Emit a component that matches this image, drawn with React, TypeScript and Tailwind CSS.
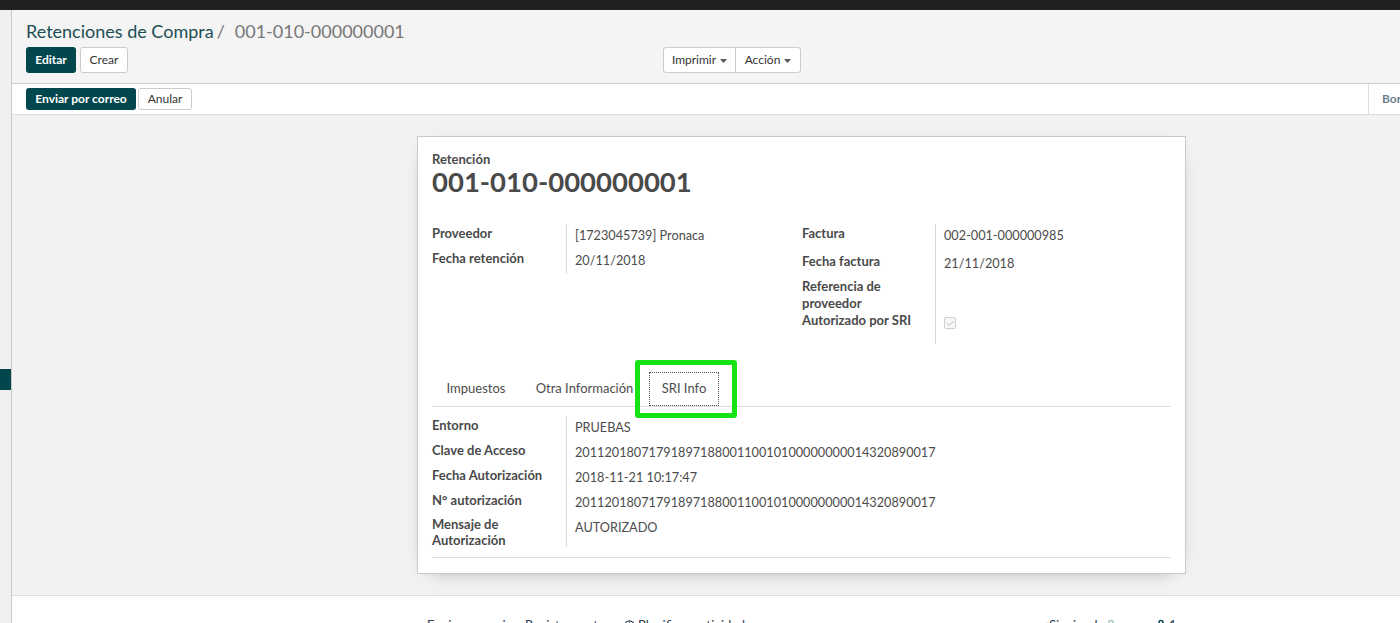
import { Check, Clock, User } from 'lucide-react'
import type { ReactNode } from 'react'

function Caret() {
  return (
    <svg width="7" height="4" viewBox="0 0 7 4" className="ml-[4px] mt-[1px]">
      <path d="M0 0h7L3.5 4z" fill="#555" />
    </svg>
  )
}

interface RowProps {
  label: ReactNode
  children?: ReactNode
  h: number
  labelW?: string
}

// one label / value pair of an Odoo form group
function Row({ label, children, h, labelW = 'w-[134px]' }: RowProps) {
  return (
    <div className="flex" style={{ height: h }}>
      <div className={`${labelW} shrink-0 pt-[1px] pr-[8px] text-[13px] leading-[17px] font-bold text-[#4a4a4a]`}>
        {label}
      </div>
      <div className="flex-1 border-l border-[#d9d9d9] pl-[8px] pt-[3px] text-[12.7px] leading-[17px] text-[#4c4c4c] whitespace-nowrap">
        {children}
      </div>
    </div>
  )
}

const clave = '2011201807179189718800110010100000000014320890017'

export default function App() {
  return (
    <div className="h-screen overflow-hidden flex flex-col bg-white font-['Lato',sans-serif] text-[13px] text-[#4c4c4c]">
      <div className="h-[10px] shrink-0 bg-[#212121]" />

      <div className="flex flex-1 min-h-0">
        <aside className="w-[12px] shrink-0 bg-[#f0f0f0] border-r border-[#c9c9c9] flex flex-col">
          <div className="h-[359px]" />
          <div className="h-[21px] bg-[#01474d]" />
        </aside>

        <main className="flex-1 min-w-0 flex flex-col">
          {/* control panel */}
          <div className="bg-[#f4f4f4] border-b border-[#cccccc] pl-[14px] pt-[10px] pb-[10px]">
            <div className="h-[22px] flex items-center text-[18px] leading-[22px] whitespace-nowrap">
              <span className="text-[#1c4e55]">Retenciones de Compra</span>
              <span className="text-[#777] ml-[3px]">/</span>
              <span className="text-[#777] ml-[10px]">001-010-000000001</span>
            </div>
            <div className="mt-[5px] flex h-[26px]">
              <div className="w-[637px] flex gap-[4px]">
                <button className="w-[50px] h-[26px] rounded-[3px] bg-[#01474d] text-white text-[12px] font-bold">
                  Editar
                </button>
                <button className="w-[48px] h-[26px] rounded-[3px] bg-white border border-[#cccccc] text-[#333] text-[12px]">
                  Crear
                </button>
              </div>
              <div className="flex h-[26px] bg-white border border-[#cccccc] rounded-[3px] text-[12px] text-[#333]">
                <button className="w-[72px] flex items-center justify-center border-r border-[#cccccc]">
                  Imprimir
                  <Caret />
                </button>
                <button className="w-[64px] flex items-center justify-center">
                  Acción
                  <Caret />
                </button>
              </div>
            </div>
          </div>

          {/* statusbar */}
          <div className="h-[31px] shrink-0 flex border-b border-[#dddddd] bg-white">
            <div className="flex-1 flex items-center gap-[2px] pl-[14px]">
              <button className="w-[110px] h-[22px] rounded-[3px] bg-[#01474d] text-white text-[12px] font-bold">
                Enviar por correo
              </button>
              <button className="w-[54px] h-[22px] rounded-[3px] bg-white border border-[#cccccc] text-[#333] text-[12px]">
                Anular
              </button>
            </div>
            <div className="w-[32px] shrink-0 border-l border-[#dddddd] pl-[13px] flex items-center overflow-hidden whitespace-nowrap text-[12px] font-bold text-[#6f7f8f]">
              Borrador
            </div>
          </div>

          {/* sheet area */}
          <div className="bg-[#f2f2f2] pt-[21px] pb-[21px]">
            <div className="ml-[405px] w-[769px] bg-white border border-[#c8c8d0] shadow-[0_5px_20px_-15px_rgba(0,0,0,0.8)] px-[14px] pt-[15px] pb-[15px]">
              <div className="text-[13px] leading-[15px] font-bold text-[#4a4a4a]">Retención</div>
              <h1 className="text-[27.5px] leading-[30px] font-bold text-[#4a4a4a]">001-010-000000001</h1>

              <div className="mt-[27px] flex h-[120px]">
                <div className="w-[370px] shrink-0">
                  <Row label="Proveedor" h={25}>[1723045739] Pronaca</Row>
                  <Row label="Fecha retención" h={25}>20/11/2018</Row>
                </div>
                <div className="flex-1">
                  <Row label="Factura" h={28} labelW="w-[133px]">002-001-000000985</Row>
                  <Row label="Fecha factura" h={25} labelW="w-[133px]">21/11/2018</Row>
                  <Row label={<>Referencia de<br />proveedor</>} h={34} labelW="w-[133px]" />
                  <Row label="Autorizado por SRI" h={33} labelW="w-[133px]">
                    <div className="mt-[3px] w-[12px] h-[12px] border border-[#cfcfcf] rounded-[2px] bg-[#f7f7f7] flex items-center justify-center">
                      <Check size={9} strokeWidth={2} className="text-[#a8a8a8]" />
                    </div>
                  </Row>
                </div>
              </div>

              {/* notebook */}
              <div className="mt-[28px] flex h-[35px] border-b border-[#dddddd] text-[13px] text-[#4c4c4c] whitespace-nowrap">
                <div className="w-[88px] h-[34px] mr-[2px] flex items-center justify-center">Impuestos</div>
                <div className="w-[125px] h-[34px] mr-[2px] flex items-center justify-center">Otra Información</div>
                <div className="relative w-[70px] h-[34px] flex items-center justify-center border border-dotted border-[#555] bg-white">
                  SRI Info
                  <div className="absolute -left-[15px] -top-[13px] -right-[19px] -bottom-[13px] border-[5px] border-[#16e216] rounded-[3px]" />
                </div>
              </div>

              <div className="pt-[9px] pb-[10px] border-b border-[#dddddd]">
                <Row label="Entorno" h={25}>PRUEBAS</Row>
                <Row label="Clave de Acceso" h={25}>{clave}</Row>
                <Row label="Fecha Autorización" h={25}>2018-11-21 10:17:47</Row>
                <Row label="N° autorización" h={25}>{clave}</Row>
                <div className="flex h-[31px]">
                  <div className="w-[134px] shrink-0 text-[13px] leading-[16px] font-bold text-[#4a4a4a]">
                    Mensaje de<br />Autorización
                  </div>
                  <div className="flex-1 border-l border-[#d9d9d9] pl-[8px] pt-[3px] text-[12.7px] leading-[17px]">
                    AUTORIZADO
                  </div>
                </div>
              </div>
            </div>
          </div>

          {/* chatter */}
          <div className="flex-1 border-t border-[#dddddd] bg-white pt-[20px] flex text-[13px] leading-[18px] whitespace-nowrap">
            <div className="ml-[415px] w-[613px] flex items-center text-[#2c3e50]">
              <span className="w-[98px]">Enviar mensaje</span>
              <span className="w-[99px]">Registrar nota</span>
              <span className="flex items-center gap-[3px]">
                <Clock size={11} strokeWidth={2.5} />
                Planificar actividad
              </span>
            </div>
            <div className="flex items-center text-[#2c3e50]">
              <span className="w-[65px] flex items-center">
                <Check size={10} strokeWidth={3} className="text-[#21a45a] mr-[1px]" />
                Siguiendo
              </span>
              <User size={12} strokeWidth={3} className="text-[#a9c4c4]" />
              <span className="ml-[38px] flex items-center gap-[2px]">
                <User size={12} strokeWidth={3} className="text-[#01474d]" />
                1
              </span>
            </div>
          </div>
        </main>
      </div>
    </div>
  )
}
